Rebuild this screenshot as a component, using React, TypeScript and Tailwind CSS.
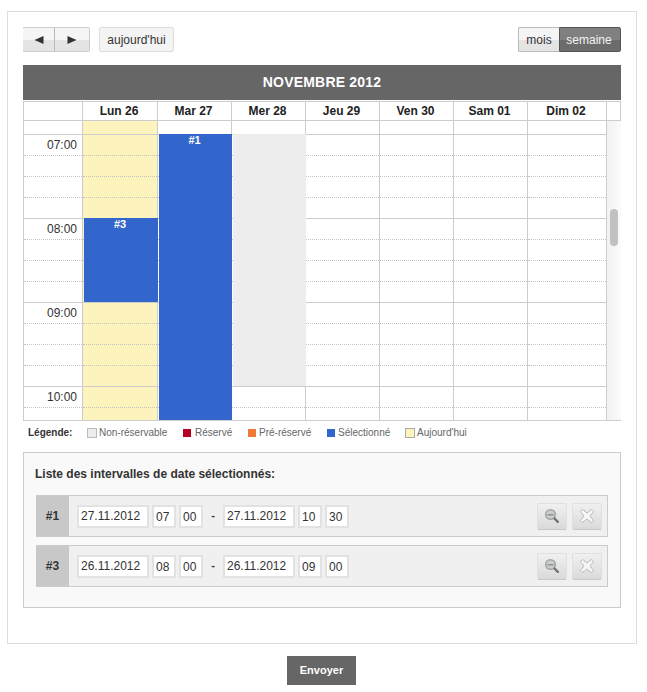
import React from "react";

const font = { fontFamily: '"Liberation Sans", Arial, sans-serif' };
const slots = Array.from({ length: 16 }, (_, i) => i);
const labels = ["07:00", "08:00", "09:00", "10:00"];

function Slots({ time }: { time?: boolean }) {
  return (
    <>
      <div className="h-[14px] border-b border-[#ccc]" />
      {slots.map((i) => (
        <div
          key={i}
          className={
            i % 4 === 3
              ? "h-[21px] border-b border-[#ccc]"
              : "h-[21px] border-b border-dotted border-[#c4c4c4]"
          }
        >
          {time && i % 4 === 0 ? (
            <div className="pr-[5px] text-right text-[12px] leading-[20px] text-[#333]">{labels[i / 4]}</div>
          ) : null}
        </div>
      ))}
    </>
  );
}

function Day({ w, bg, children }: { w: string; bg?: string; children?: React.ReactNode }) {
  return (
    <div className={`relative shrink-0 border-r border-[#ccc] ${w} ${bg ?? ""}`}>
      <Slots />
      {children}
    </div>
  );
}

function Head({ w, label }: { w: string; label?: string }) {
  return (
    <div className={`shrink-0 border-r border-[#ccc] pr-[2px] text-center text-[12px] font-bold leading-[19px] text-[#222] ${w}`}>
      {label}
    </div>
  );
}

function Swatch({ cls }: { cls: string }) {
  return <span className={`inline-block ${cls}`} />;
}

function Field({ w, value }: { w: string; value: string }) {
  return (
    <input
      readOnly
      value={value}
      className={`h-[23px] border-2 border-[#e2e2e2] bg-white pl-[2px] text-[12px] text-[#333] outline-none ${w}`}
    />
  );
}

function IconBtn({ kind }: { kind: "zoom" | "close" }) {
  return (
    <div className="flex h-[27px] w-[30px] items-center justify-center rounded-[2px] border border-[#e0e0e0] border-b-[#c8c8c8] bg-gradient-to-b from-[#f0f0f0] to-[#dadada]">
      {kind === "zoom" ? (
        <svg width="16" height="16" viewBox="0 0 16 16">
          <circle cx="6.5" cy="6.5" r="4.8" fill="#c9cfcf" stroke="#a2a6a6" strokeWidth="1.6" />
          <rect x="3.5" y="6" width="6" height="1.6" fill="#8f9494" />
          <path d="M10.5 10.5 L13.8 13.8" stroke="#6f7272" strokeWidth="2.4" strokeLinecap="round" />
        </svg>
      ) : (
        <svg width="16" height="16" viewBox="0 0 16 16">
          <path
            d="M3.5 1.5 L8 5 L12.5 1.5 L14.5 3.5 L11 8 L14.5 12.5 L12.5 14.5 L8 11 L3.5 14.5 L1.5 12.5 L5 8 L1.5 3.5 Z"
            fill="#f6f6f6"
            stroke="#a6a6a6"
            strokeWidth="1"
            strokeDasharray="1.4 0.5"
          />
        </svg>
      )}
    </div>
  );
}

function Interval({ n, d1, h1, m1, d2, h2, m2 }: Record<string, string>) {
  return (
    <div className="flex h-[42px] items-stretch border border-l-0 border-[#ccc] bg-[#f0f0f0]">
      <div className="flex w-[33px] items-center justify-center bg-[#c8c8c8] text-[12px] font-bold text-[#333]">{n}</div>
      <div className="flex flex-1 items-center pl-[8px] pr-[5px]">
        <Field w="w-[72px]" value={d1} />
        <div className="ml-[3px]"><Field w="w-[24px]" value={h1} /></div>
        <div className="ml-[3px]"><Field w="w-[24px]" value={m1} /></div>
        <div className="w-[20px] pb-[2px] text-center text-[11px] font-bold leading-[12px] text-[#333]">-</div>
        <Field w="w-[72px]" value={d2} />
        <div className="ml-[3px]"><Field w="w-[24px]" value={h2} /></div>
        <div className="ml-[3px]"><Field w="w-[24px]" value={m2} /></div>
        <div className="ml-auto flex gap-[5px]">
          <IconBtn kind="zoom" />
          <IconBtn kind="close" />
        </div>
      </div>
    </div>
  );
}

export default function App() {
  return (
    <div style={font} className="h-[692px] w-[647px] overflow-hidden bg-white pl-[7px] pt-[11px]">
      <div className="h-[633px] w-[630px] border border-[#ddd] px-[15px] pt-[15px]">
        <div className="flex h-[25px] items-stretch text-[12px]">
          <div className="flex h-[25px] w-[67px] items-stretch rounded-r-[2px] border border-l-0 border-[#ccc] bg-[linear-gradient(#f5f5f5_50%,#e4e4e4_50%)]">
            <div className="flex w-[32px] items-center justify-center border-r border-[#bbb]">
              <svg width="10" height="10" viewBox="0 0 10 10"><path d="M0.5 5 L9.5 1 V9 Z" fill="#333" /></svg>
            </div>
            <div className="flex flex-1 items-center justify-center">
              <svg width="10" height="10" viewBox="0 0 10 10"><path d="M9.5 5 L0.5 1 V9 Z" fill="#333" /></svg>
            </div>
          </div>
          <div className="ml-[9px] flex w-[75px] items-center justify-center rounded-[2px] border border-[#ddd] bg-[#f4f4f4] text-[#333]">aujourd'hui</div>
          <div className="ml-auto flex">
            <div className="flex w-[41px] items-center justify-center rounded-l-[2px] border border-r-0 border-[#bbb] bg-[linear-gradient(#f5f5f5_50%,#e4e4e4_50%)] text-[#333]">mois</div>
            <div className="flex w-[62px] items-center justify-center rounded-r-[2px] border border-[#555] bg-[linear-gradient(#808080_50%,#6c6c6c_50%)] pr-[2px] text-[#f4f4f4]">semaine</div>
          </div>
        </div>

        <div className="mt-[13px] flex h-[35px] items-center justify-center bg-[#666] text-[14px] font-bold tracking-[0.2px] text-white">NOVEMBRE 2012</div>

        <div className="mt-px flex h-[20px] border-y border-l border-[#ccc]">
          <Head w="w-[59px]" />
          <Head w="w-[75px]" label="Lun 26" />
          <Head w="w-[74px]" label="Mar 27" />
          <Head w="w-[74px]" label="Mer 28" />
          <Head w="w-[74px]" label="Jeu 29" />
          <Head w="w-[74px]" label="Ven 30" />
          <Head w="w-[74px]" label="Sam 01" />
          <Head w="w-[79px]" label="Dim 02" />
          <Head w="w-[14px]" />
        </div>

        <div className="flex h-[300px] overflow-hidden border-b border-l border-[#ccc]">
          <div className="w-[59px] shrink-0 border-r border-[#ccc]">
            <Slots time />
          </div>
          <Day w="w-[75px]" bg="bg-[#fdf3bd]">
            <div className="absolute left-px top-[97px] h-[84px] w-[74px] bg-[#3366cc] pr-[2px] text-center text-[11px] font-bold leading-[13px] text-white">#3</div>
          </Day>
          <Day w="w-[74px]">
            <div className="absolute left-px top-[13px] h-[286px] w-[73px] bg-[#3366cc] pr-[2px] text-center text-[11px] font-bold leading-[13px] text-white">#1</div>
          </Day>
          <Day w="w-[74px]">
            <div className="absolute left-px top-[13px] h-[252px] w-[73px] bg-[#ededed]" />
          </Day>
          <Day w="w-[74px]" />
          <Day w="w-[74px]" />
          <Day w="w-[74px]" />
          <Day w="w-[79px]" />
          <div className="relative w-[14px] shrink-0 bg-[linear-gradient(90deg,#f2f2f2,#fbfbfb)]">
            <div className="absolute left-[3px] top-[88px] h-[37px] w-[8px] rounded-[4px] bg-[#c1c1c1]" />
          </div>
        </div>

        <div className="flex h-[31px] items-center pb-[8px] pl-[5px] text-[10px] text-[#666]">
          <span className="w-[59px] font-bold text-[#333]">Légende:</span>
          <Swatch cls="h-[10px] w-[10px] border border-[#bbb] bg-[#ededed]" />
          <span className="ml-[2px] w-[84px]">Non-réservable</span>
          <Swatch cls="h-[8px] w-[8px] bg-[#b5001f]" />
          <span className="ml-[4px] w-[53px]">Réservé</span>
          <Swatch cls="h-[8px] w-[8px] bg-[#f07838]" />
          <span className="ml-[3px] w-[68px]">Pré-réservé</span>
          <Swatch cls="h-[8px] w-[8px] bg-[#3366cc]" />
          <span className="ml-[3px] w-[67px]">Sélectionné</span>
          <Swatch cls="h-[10px] w-[10px] border border-[#aaa] bg-[#fdf3bd]" />
          <span className="ml-[2px]">Aujourd'hui</span>
        </div>

        <div className="h-[156px] border border-[#ccc] bg-[#f9f9f9] px-[12px]">
          <div className="ml-[-1px] flex h-[42px] items-center text-[12px] font-bold text-[#333]">Liste des intervalles de date sélectionnés:</div>
          <div className="flex flex-col gap-[8px]">
            <Interval n="#1" d1="27.11.2012" h1="07" m1="00" d2="27.11.2012" h2="10" m2="30" />
            <Interval n="#3" d1="26.11.2012" h1="08" m1="00" d2="26.11.2012" h2="09" m2="00" />
          </div>
        </div>
      </div>
      <div className="mt-[12px] flex w-[630px] justify-center">
        <div className="ml-[-1px] flex h-[29px] w-[69px] items-center justify-center bg-[#666] text-[11px] font-bold text-white">Envoyer</div>
      </div>
    </div>
  );
}
